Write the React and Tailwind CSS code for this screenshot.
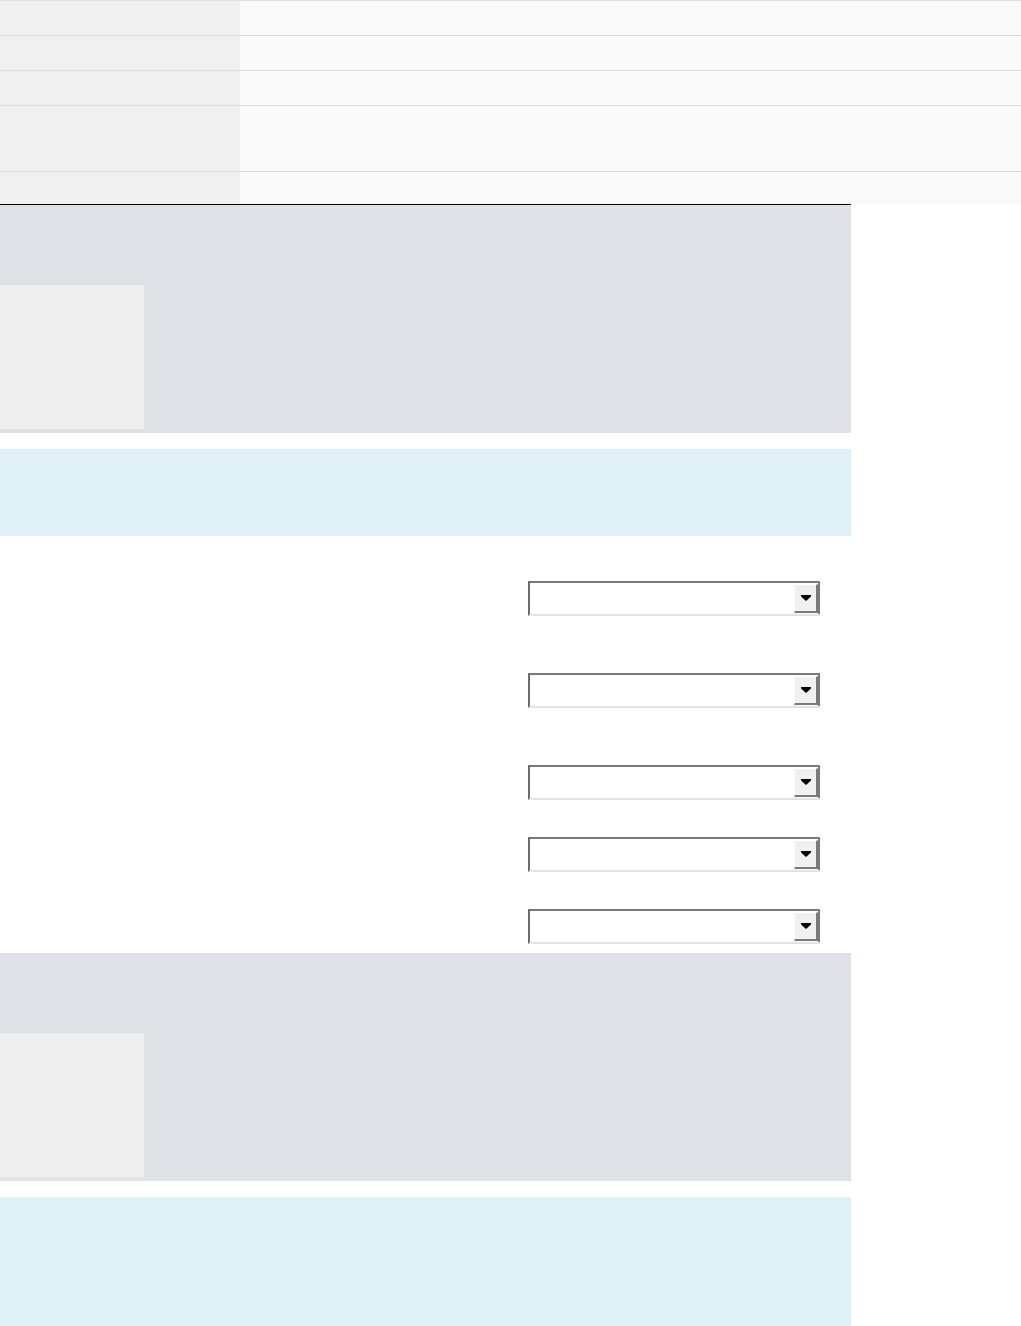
export default function App() {
  const rows = [
    { h: "h-[35px]", border: true },
    { h: "h-[35px]", border: true },
    { h: "h-[35px]", border: true },
    { h: "h-[66px]", border: true },
    { h: "h-[32px]", border: false },
  ];

  const selects = ["mt-[45px]", "mt-[57px]", "mt-[57px]", "mt-[37px]", "mt-[37px]"];

  const Select = ({ className }) => (
    <div
      className={`w-[292px] h-[35px] flex bg-white border-t-2 border-l-2 border-b-2 border-r-0 border-t-[#7a7a7a] border-l-[#6b6b6b] border-b-[#e3e3e3] ${className}`}
    >
      <div className="flex-1" />
      <div className="w-[26px] h-full flex items-stretch">
        <div className="flex-1 my-px bg-[#f0f0f0] border-t border-l border-r-2 border-b-2 border-t-white border-l-white border-r-[#7a7a7a] border-b-[#7a7a7a] flex items-center justify-center">
          <svg width="10" height="6" viewBox="0 0 10 6">
            <path d="M0 0h10v1.5l-5 4.5-5-4.5z" fill="#000" />
          </svg>
        </div>
        <div className="w-[2px] bg-[#7a7a7a]" />
      </div>
    </div>
  );

  const Panel = () => (
    <div className="w-[851px] h-[228px] bg-[#dee1e6] pt-[80px] pb-[4px]">
      <div className="w-[144px] h-[144px] bg-[#efefef]" />
    </div>
  );

  return (
    <div className="w-[1021px] min-h-[1326px] bg-white" style={{ fontFamily: "'Liberation Sans', Arial, sans-serif" }}>
      {/* Table */}
      <div className="w-[1021px] border-t border-[#dde0e6]">
        {rows.map((r, i) => (
          <div key={i} className={`flex ${r.h} ${r.border ? "border-b border-[#dedede]" : ""}`}>
            <div className="w-[240px] bg-[#f0f0f0]" />
            <div className="flex-1 bg-[#fafafa]" />
          </div>
        ))}
      </div>
      <div className="w-[851px] h-px bg-black" />

      <Panel />

      <div className="w-[851px] h-[87px] mt-[16px] bg-[#dff0f7]" />

      {/* Selects */}
      <div className="w-[851px] h-[417px] pl-[528px] flex flex-col">
        {selects.map((m, i) => (
          <Select key={i} className={m} />
        ))}
      </div>

      <Panel />

      <div className="w-[851px] h-[140px] mt-[16px] bg-[#dff0f7]" />
    </div>
  );
}
